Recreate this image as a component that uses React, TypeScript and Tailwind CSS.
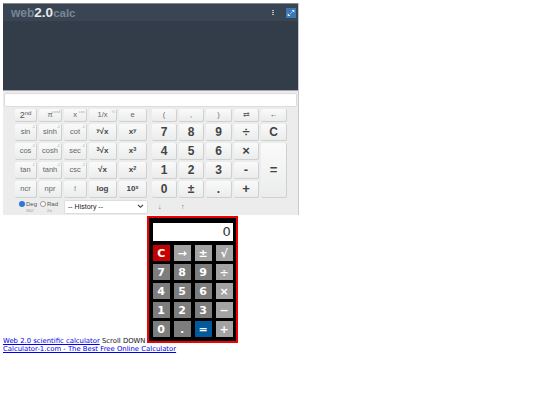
function K({ children, cls = "", sup }: { children: React.ReactNode; cls?: string; sup?: string }) {
  return (
    <div className={`relative flex items-center justify-center rounded-[2px] border-b border-r border-[#cfd1d1] bg-gradient-to-b from-[#fafafa] to-[#ebecec] ${cls}`}>
      {sup ? <span className="absolute right-[1px] top-[0px] text-[4px] leading-[5px] text-[#aaa]">{sup}</span> : null}
      {children}
    </div>
  );
}

const fn = "text-[7.5px] text-[#666]";
const bold = "text-[8px] font-bold text-[#444]";
const num = "text-[12px] font-bold text-[#444]";
const op = "text-[13px] font-bold text-[#444]";

function S({ children }: { children: React.ReactNode }) {
  return <sup className="relative top-[-1px] align-baseline text-[5.5px] leading-none">{children}</sup>;
}

function Mini({ children, cls }: { children: React.ReactNode; cls: string }) {
  return <div className={`flex h-[16px] w-[17px] items-center justify-center text-[11px] font-bold leading-none text-white ${cls}`}>{children}</div>;
}

export default function App() {
  const g = "bg-[#7d7d7d]";
  const l = "bg-[#a3a3a3]";
  return (
    <div className="h-[405px] w-[540px] overflow-hidden bg-white p-[3px] font-['DejaVu_Sans',sans-serif] text-[6.87px] leading-[8px] text-[#111]">
      <div className="w-[296px] border-r border-[#c9c9c9] font-['Liberation_Sans',sans-serif]">
        <div className="h-[87px] border-t border-[#888] bg-[#333d49]">
          <div className="flex h-[17px] items-center bg-[#3a4553] pl-[8px] pr-[2px]">
            <div className="text-[12px] font-bold leading-none text-[#778695]">
              web<span className="text-[13.5px] text-[#e8eaec]">2.0</span><span className="text-[11.5px]">calc</span>
            </div>
            <div className="ml-auto mr-[12px] flex flex-col gap-[1px]">
              <div className="h-[1px] w-[2px] bg-[#c0c5ca]" />
              <div className="h-[1px] w-[2px] bg-[#c0c5ca]" />
              <div className="h-[1px] w-[2px] bg-[#c0c5ca]" />
            </div>
            <div className="flex h-[10px] w-[10px] items-center justify-center bg-[#3b78b5]">
              <svg viewBox="0 0 10 10" className="h-[10px] w-[10px]">
                <path d="M5.5 2h2.8v2.8zM4.5 8H1.7V5.2z" fill="#e6f0f8" />
                <path d="M4 6L6.5 3.5" stroke="#e6f0f8" strokeWidth="0.6" />
              </svg>
            </div>
          </div>
        </div>
        <div className="h-[125px] border-t border-[#a8a8a8] bg-[#ececec] pt-[2px]">
          <div className="mx-[1px] h-[14px] rounded-[2px] border border-[#dcdcdc] bg-white" />
          <div className="mt-[2px] grid grid-cols-[22px_23px_23px_28px_28px_1px_25px_25px_26px_25px_26px] grid-rows-[13px_17px_17px_17px_17px] gap-[2px] pl-[12px]">
            <K cls="text-[9px] text-[#555]">2<span className="relative top-[-2px] text-[6px]">nd</span></K>
            <K cls={fn} sup="cosd">π</K>
            <K cls={fn} sup="cos">x</K>
            <K cls={fn} sup="%">1/x</K>
            <K cls={fn}>e</K>
            <div />
            <K cls={fn}>(</K>
            <K cls={fn}>,</K>
            <K cls={fn}>)</K>
            <K cls={fn}>⇄</K>
            <K cls="text-[8px] font-bold text-[#444]">←</K>

            <K cls={fn} sup="-1">sin</K>
            <K cls={fn} sup="-1">sinh</K>
            <K cls={fn} sup="-1">cot</K>
            <K cls={bold}><S>y</S>√x</K>
            <K cls={bold}>x<S>y</S></K>
            <div />
            <K cls={num}>7</K>
            <K cls={num}>8</K>
            <K cls={num}>9</K>
            <K cls={op}>÷</K>
            <K cls={num}>C</K>

            <K cls={fn} sup="-1">cos</K>
            <K cls={fn} sup="-1">cosh</K>
            <K cls={fn} sup="-1">sec</K>
            <K cls={bold}><S>3</S>√x</K>
            <K cls={bold}>x<S>3</S></K>
            <div />
            <K cls={num}>4</K>
            <K cls={num}>5</K>
            <K cls={num}>6</K>
            <K cls={op}>×</K>
            <K cls={`${op} row-span-3`}>=</K>

            <K cls={fn} sup="-1">tan</K>
            <K cls={fn} sup="-1">tanh</K>
            <K cls={fn} sup="-1">csc</K>
            <K cls={bold}>√x</K>
            <K cls={bold}>x<S>2</S></K>
            <div />
            <K cls={num}>1</K>
            <K cls={num}>2</K>
            <K cls={num}>3</K>
            <K cls={op}>-</K>

            <K cls={fn}>ncr</K>
            <K cls={fn}>npr</K>
            <K cls={fn}>!</K>
            <K cls={bold}>log</K>
            <K cls={bold}>10<S>x</S></K>
            <div />
            <K cls={num}>0</K>
            <K cls={num}>±</K>
            <K cls={num}>.</K>
            <K cls={op}>+</K>
          </div>
          <div className="mt-[1px] flex h-[15px] items-center pl-[16px] text-[6px] text-[#555]">
            <div className="flex w-[21px] flex-col items-start">
              <div className="flex items-center gap-[1px]">
                <span className="h-[6px] w-[6px] rounded-full bg-[#2b78d8]" />Deg
              </div>
              <span className="ml-[7px] text-[4px] leading-[5px] text-[#999]">360°</span>
            </div>
            <div className="flex w-[24px] flex-col items-start">
              <div className="flex items-center gap-[1px]">
                <span className="h-[6px] w-[6px] rounded-full border border-[#999] bg-white" />Rad
              </div>
              <span className="ml-[7px] text-[4px] leading-[5px] text-[#999]">2π</span>
            </div>
            <div className="flex h-[14px] w-[84px] items-center justify-between rounded-[2px] border border-[#ddd] bg-white pl-[3px] pr-[3px] text-[7px] text-[#222]">
              <span>-- History --</span>
              <svg viewBox="0 0 8 6" className="h-[5px] w-[7px]"><path d="M1 1l3 3 3-3" fill="none" stroke="#333" strokeWidth="1.3" /></svg>
            </div>
            <span className="ml-[10px] w-[23px] text-[7px] text-[#666]">↓</span>
            <span className="text-[7px] text-[#666]">↑</span>
          </div>
        </div>
      </div>
      <div className="mt-[1px] whitespace-nowrap">
        <a href="#" className="text-[#0000ee] underline">Web 2.0 scientific calculator</a>{" "}
        Scroll DOWN{" "}
        <div className="-ml-[1px] inline-block h-[127px] w-[91px] overflow-hidden border-[2px] border-[#f00000] bg-black pl-[4px] pt-[5px]">
          <div className="flex h-[18px] w-[80px] items-center justify-end bg-white pr-[2px] text-[13px] text-[#333]">0</div>
          <div className="mt-[4px] grid grid-cols-[17px_17px_17px_17px] gap-x-[4px] gap-y-[3px]">
            <Mini cls="bg-[#c40000]">C</Mini><Mini cls={l}>→</Mini><Mini cls={l}>±</Mini><Mini cls={l}>√</Mini>
            <Mini cls={g}>7</Mini><Mini cls={g}>8</Mini><Mini cls={g}>9</Mini><Mini cls={l}>÷</Mini>
            <Mini cls={g}>4</Mini><Mini cls={g}>5</Mini><Mini cls={g}>6</Mini><Mini cls={l}>×</Mini>
            <Mini cls={g}>1</Mini><Mini cls={g}>2</Mini><Mini cls={g}>3</Mini><Mini cls={l}>−</Mini>
            <Mini cls={g}>0</Mini><Mini cls={g}>.</Mini><Mini cls="bg-[#005a9c]">=</Mini><Mini cls={l}>+</Mini>
          </div>
        </div>
      </div>
      <a href="#" className="block whitespace-nowrap text-[#0000ee] underline">Calculator-1.com - The Best Free Online Calculator</a>
    </div>
  );
}
